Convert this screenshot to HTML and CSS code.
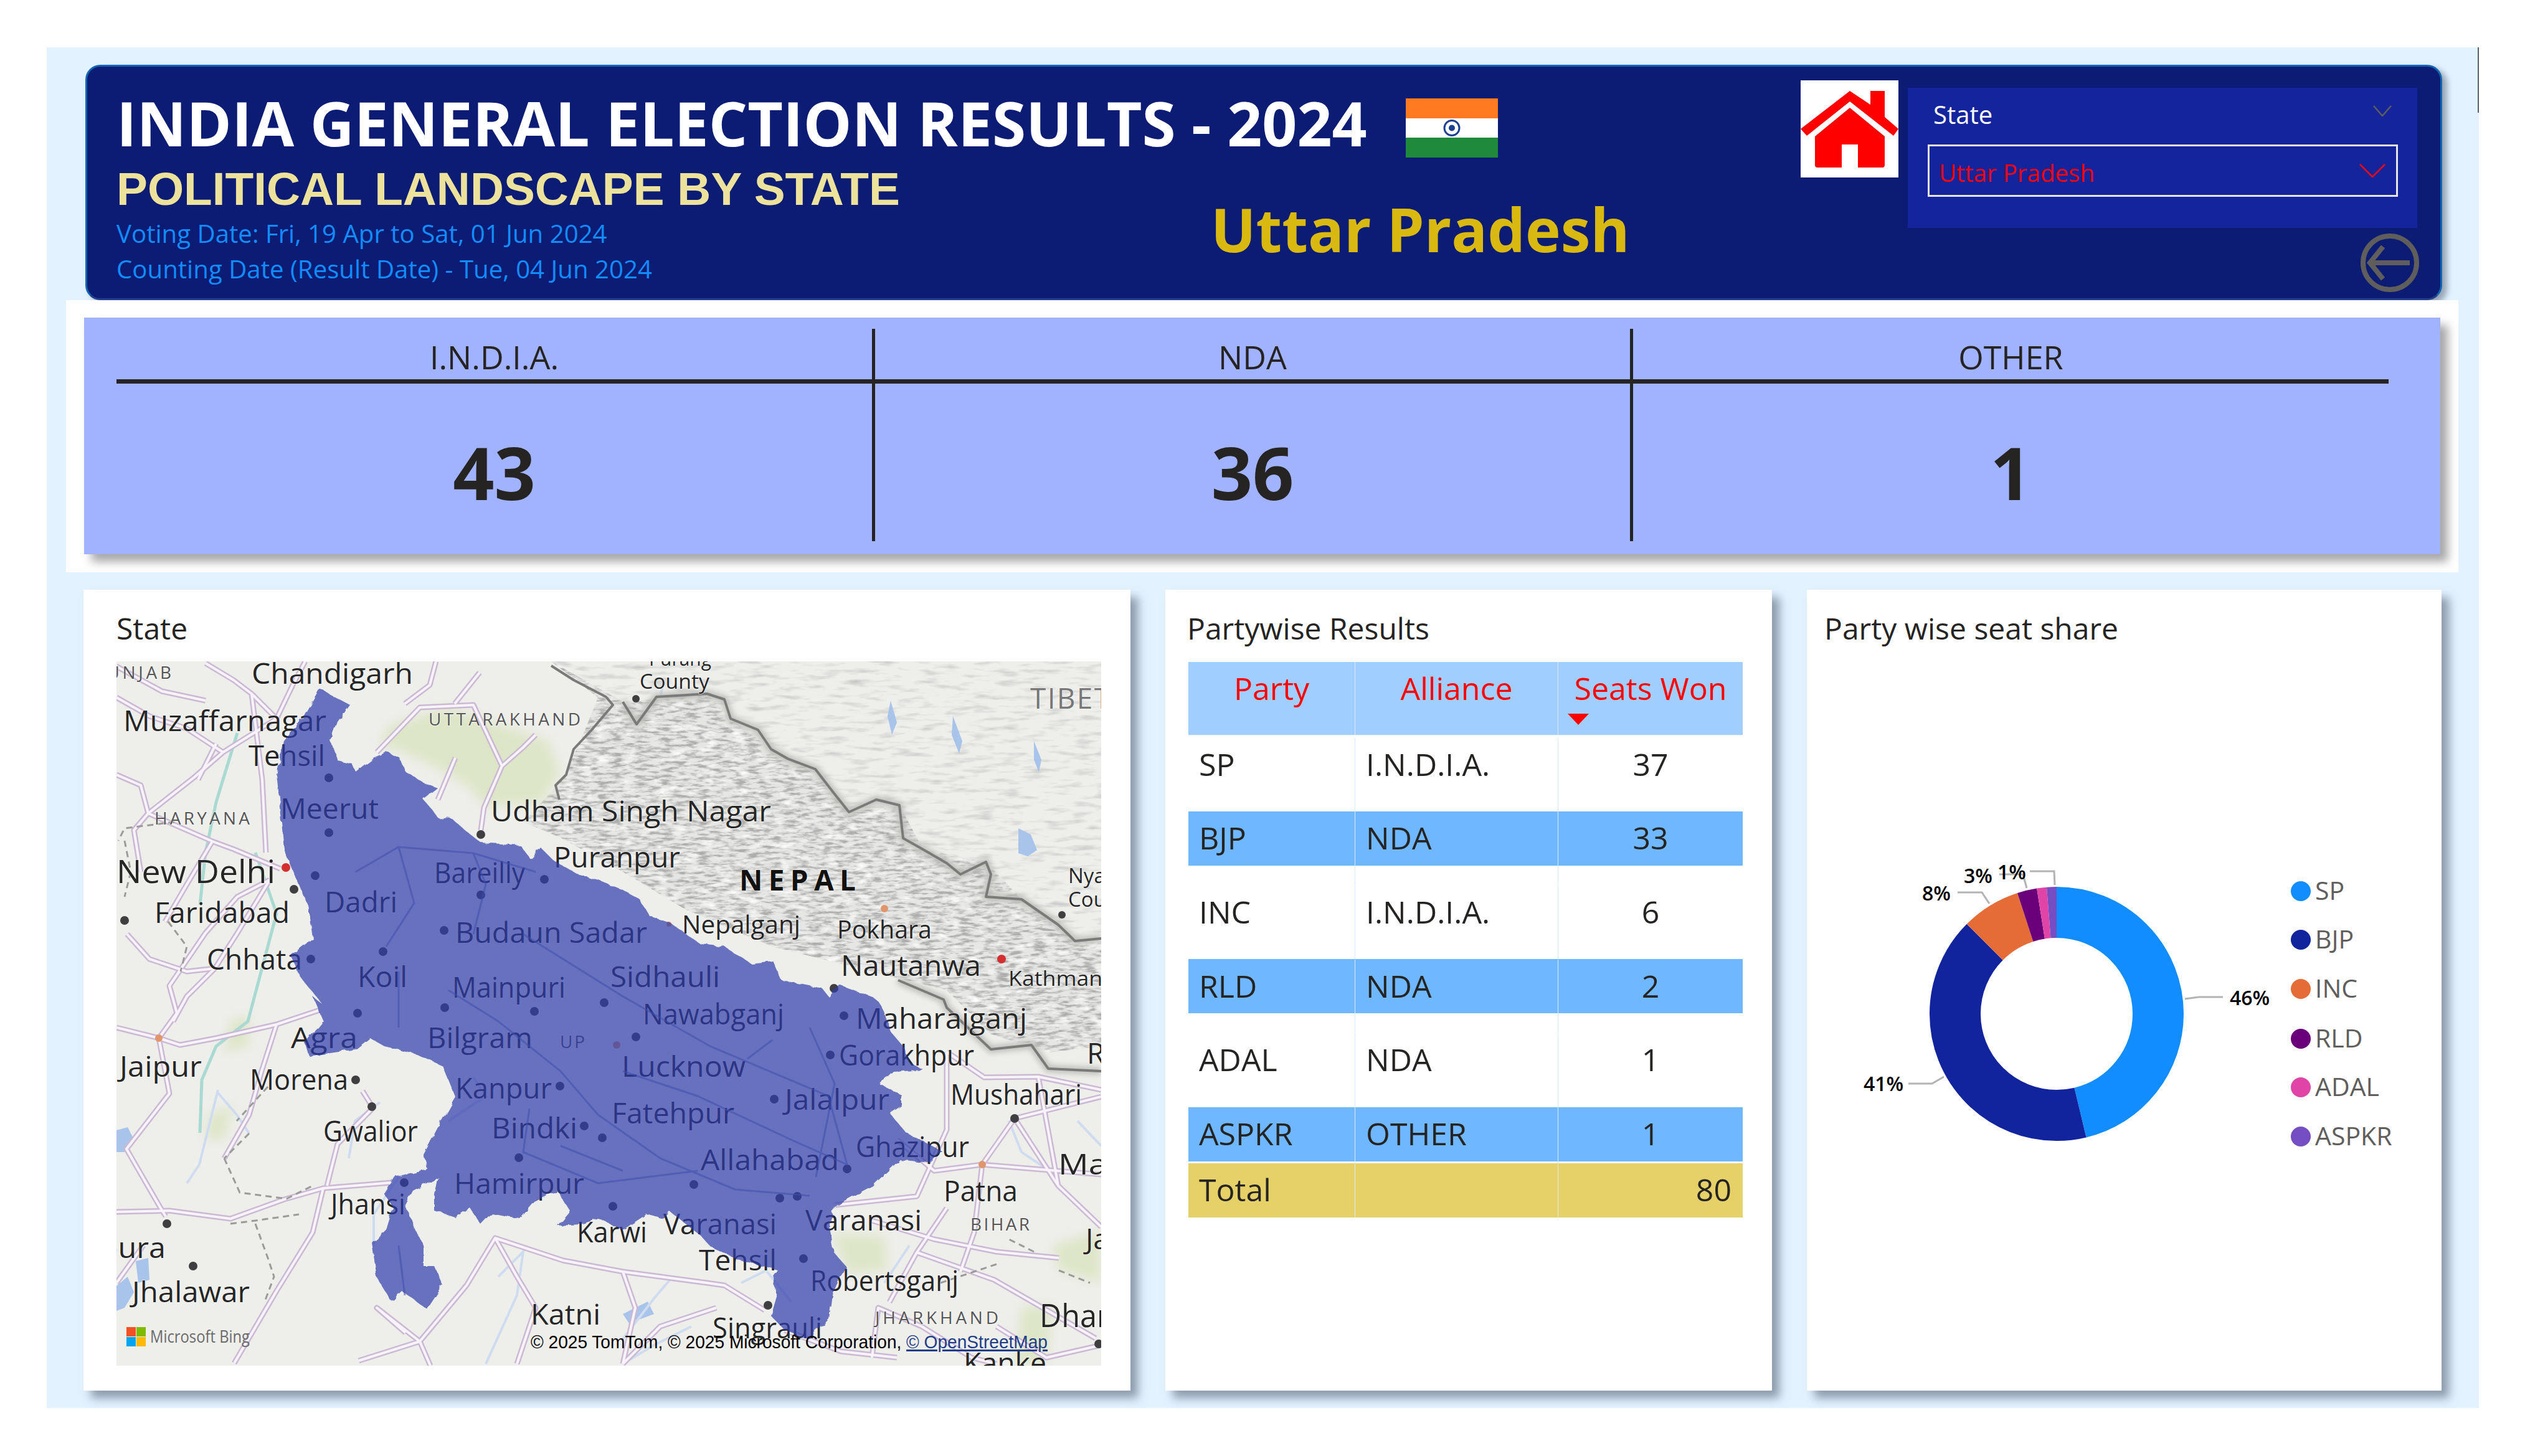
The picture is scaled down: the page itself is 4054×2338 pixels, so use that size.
FILE: index.html
```html
<!DOCTYPE html>
<html lang="en">
<head>
  <meta charset="UTF-8" />
  <title>India General Election Results - 2024</title>
  <link rel="stylesheet" href="styles.css">
</head>
<body>

  <div class="report">

    <!-- Top banner -->
    <header class="banner">
      <div class="banner-left">
        <div class="title-row">
          <h1 class="title">INDIA GENERAL ELECTION RESULTS - 2024</h1>
          <svg class="flag" viewBox="0 0 148 95">
            <rect width="148" height="32" fill="#ff7a21"/>
            <rect y="32" width="148" height="31" fill="#ffffff"/>
            <rect y="63" width="148" height="32" fill="#1f8a3b"/>
            <circle cx="74" cy="47.5" r="12" fill="none" stroke="#1c3f94" stroke-width="3"/>
            <circle cx="74" cy="47.5" r="5" fill="#1c3f94"/>
          </svg>
        </div>
        <div class="sub-row">
          <div class="sub-left">
            <h2 class="subtitle">POLITICAL LANDSCAPE BY STATE</h2>
            <p class="date date-first">Voting Date: Fri, 19 Apr to Sat, 01 Jun 2024</p>
            <p class="date">Counting Date (Result Date) - Tue, 04 Jun 2024</p>
          </div>
          <div class="state-name">Uttar Pradesh</div>
        </div>
      </div>

      <div class="banner-right">
        <div class="home-tile">
          <svg class="home-icon" viewBox="0 0 157 156">
            <path fill="#ff0000" d="M79 17 L112 39 L112 17 L135 17 L135 59 L157 78 L149 89 L79 34 L10 89 L0 78 Z"/>
            <path fill="#ff0000" d="M79 44 L135 90 L135 136 Q135 140 131 140 L92 140 L92 103 L66 103 L66 140 L27 140 Q23 140 23 136 L23 90 Z"/>
          </svg>
        </div>
        <div class="right-col">
          <div class="slicer">
            <div class="slicer-head">
              <span class="slicer-label">State</span>
              <svg class="chev-small" viewBox="0 0 30 18"><path d="M1 1 L15 17 L29 1"/></svg>
            </div>
            <div class="slicer-box">
              <span>Uttar Pradesh</span>
              <svg class="chev-red" viewBox="0 0 42 22"><path d="M1 1 L21 21 L41 1"/></svg>
            </div>
          </div>
          <svg class="back-btn" viewBox="0 0 94 94">
            <circle cx="47" cy="47" r="43" fill="none" stroke="#605e5c" stroke-width="8"/>
            <path d="M36 21 L15 47 L36 73 M15 47 L79 47" fill="none" stroke="#605e5c" stroke-width="8"/>
          </svg>
        </div>
      </div>
    </header>

    <!-- Alliance totals -->
    <section class="kpi-band">
      <div class="kpi-card">
        <div class="kpi">
          <div class="kpi-label">I.N.D.I.A.</div>
          <div class="kpi-value">43</div>
        </div>
        <div class="kpi">
          <div class="kpi-label">NDA</div>
          <div class="kpi-value">36</div>
        </div>
        <div class="kpi kpi-last">
          <div class="kpi-label">OTHER</div>
          <div class="kpi-value">1</div>
        </div>
      </div>
    </section>

    <section class="cards">

      <!-- Map -->
      <div class="card card-map">
        <h3 class="card-title">State</h3>
        <svg class="map" viewBox="187 1062 1581 1131">
          <defs>
            <filter id="rough" x="-5%" y="-5%" width="110%" height="110%">
              <feTurbulence type="fractalNoise" baseFrequency="0.07" numOctaves="2" seed="4"/>
              <feDisplacementMap in="SourceGraphic" scale="9"/>
            </filter>
            <filter id="hillnoise" x="0" y="0" width="100%" height="100%">
              <feTurbulence type="fractalNoise" baseFrequency="0.05 0.22" numOctaves="4" seed="8"/>
              <feColorMatrix values="0 0 0 0 0.42  0 0 0 0 0.42  0 0 0 0 0.42  3.6 0 0 0 -1.55"/>
            </filter>
            <filter id="snownoise" x="0" y="0" width="100%" height="100%">
              <feTurbulence type="fractalNoise" baseFrequency="0.04 0.08" numOctaves="3" seed="5"/>
              <feColorMatrix values="0 0 0 0 1  0 0 0 0 1  0 0 0 0 1  2.6 0 0 0 -1.35"/>
            </filter>
            <filter id="plainnoise" x="0" y="0" width="100%" height="100%">
              <feTurbulence type="fractalNoise" baseFrequency="0.025 0.12" numOctaves="3" seed="2"/>
              <feColorMatrix values="0 0 0 0 0.55  0 0 0 0 0.55  0 0 0 0 0.55  2 0 0 0 -0.98"/>
            </filter>
            <filter id="soft"><feGaussianBlur stdDeviation="9"/></filter>
            <filter id="soft2"><feGaussianBlur stdDeviation="5"/></filter>
            <clipPath id="hillclip">
              <path d="M885 1062 L1000 1127 L1135 1114 L1173 1154 L1238 1203 L1309 1235 L1363 1304 L1444 1293 L1482 1364 L1583 1384 L1640 1444 L1726 1511 L1768 1507 L1768 1680 L1683 1690 L1590 1660 L1520 1590 L1400 1560 L1240 1520 L1100 1460 L1000 1400 L900 1345 L840 1320 L905 1250 L940 1170 L960 1120 Z"/>
            </clipPath>
            <clipPath id="tibetclip">
              <path d="M885 1062 L1768 1062 L1768 1507 L1726 1511 L1640 1444 L1583 1384 L1482 1364 L1444 1293 L1363 1304 L1309 1235 L1238 1203 L1173 1154 L1135 1114 L1000 1127 Z"/>
            </clipPath>
          </defs>

          <rect class="map-land" x="187" y="1062" width="1581" height="1131"/>

          <!-- Terrain -->
          <g clip-path="url(#tibetclip)">
            <rect x="187" y="1062" width="1581" height="1131" filter="url(#plainnoise)"/>
          </g>
          <g clip-path="url(#hillclip)">
            <rect class="map-hill" x="187" y="1062" width="1581" height="1131"/>
            <rect x="187" y="1062" width="1581" height="1131" filter="url(#hillnoise)"/>
            <rect x="187" y="1062" width="1581" height="1131" filter="url(#snownoise)"/>
          </g>
          <g class="map-green" filter="url(#soft)">
            <path d="M610 1195 L625 1165 L720 1135 L880 1190 L900 1240 L870 1290 L780 1295 L750 1262 L700 1232 L640 1205 Z"/>
            <path d="M1336 1980 L1420 1985 L1425 2040 L1360 2045 Z"/>
            <path d="M1640 2100 L1690 2095 L1680 2190 L1630 2190 Z"/>
            <path d="M1690 2000 L1768 1975 L1768 2060 L1700 2040 Z"/>
            <path d="M370 1640 L400 1630 L400 1680 L360 1690 Z"/>
            <path d="M335 1790 L375 1775 L360 1830 L330 1830 Z"/>
          </g>

          <!-- Water -->
          <g class="map-water">
            <path d="M187 1815 L205 1810 L215 1830 L200 1850 L187 1850 Z"/>
            <path d="M218 2025 L238 2020 L240 2055 L222 2060 Z"/>
            <path d="M187 2065 L205 2050 L215 2075 L200 2100 L187 2105 Z"/>
            <path d="M1430 1125 L1440 1160 L1432 1180 L1425 1150 Z"/>
            <path d="M1530 1150 L1545 1190 L1540 1210 L1528 1180 Z"/>
            <path d="M1660 1190 L1672 1220 L1668 1240 L1660 1220 Z"/>
            <path d="M1635 1330 L1655 1340 L1665 1365 L1650 1375 L1635 1370 Z"/>
            <path d="M1000 2110 L1040 2090 L1050 2110 L1010 2125 Z"/>
          </g>
          <g class="map-river">
            <path d="M1065 1095 L1060 1120 M1000 2150 L1050 2085 L1080 2050 M560 1860 L570 1800 L610 1770 M640 1890 L600 1950 L600 2000 M720 1800 L780 1760 L760 1730 M350 1755 L380 1790 L400 1820 M300 1900 L320 1870 L350 1750 M1000 2190 L1050 2160 L1110 2130 M800 2050 L840 2010 L830 2080 L780 2190 M1620 1800 L1640 1850 L1700 1890 M1460 2000 L1420 2060 M1730 1800 L1768 1840 M1190 2060 L1230 2040 L1270 2090"/>
          </g>
          <g class="map-teal">
            <path d="M381 1177 L347 1288 L330 1369 L321 1453"/>
            <path d="M410 1369 L444 1467 L398 1640 L347 1680 L324 1734 L321 1819"/>
          </g>

          <!-- Roads -->
          <g id="roads" class="road-set">
            <path d="M255 1667 L289 1678 L347 1667 L444 1645 L513 1622"/>
            <path d="M255 1667 L284 1627 L272 1583 L330 1498 L381 1440 L433 1413"/>
            <path d="M255 1667 L272 1756 L203 1845 L255 1935 L266 1953"/>
            <path d="M187 1946 L272 1944 L370 1957 L456 1926 L519 1908 L628 1899"/>
            <path d="M519 1908 L502 1979 L444 2073 L376 2189"/>
            <path d="M582 1752 L599 1779 L542 1837 L525 1904"/>
            <path d="M674 2154 L749 2064 L795 1988 L904 2024 L1000 2042 L1135 2060 L1163 2064 L1228 2104"/>
            <path d="M674 2154 L605 2100 L651 2140 M674 2154 L576 2185 M674 2154 L691 2193"/>
            <path d="M1520 1689 L1520 1814 L1472 1921 L1341 1935"/>
            <path d="M1629 1796 L1768 1761 M1629 1796 L1577 1870 L1768 1886 M1577 1870 L1564 1979 L1542 2042"/>
            <path d="M1472 2011 L1596 2055 L1759 2149 M1428 2091 L1472 2011 L1520 1940"/>
            <path d="M1667 1729 L1699 1904 L1768 1970 M1629 1796 L1699 1904"/>
            <path d="M605 1208 L674 1136 L760 1132 L806 1230 L777 1297 L772 1333 M731 1217 L703 1284"/>
            <path d="M330 1065 L375 1092 L404 1114 L444 1154 L358 1208 L312 1248 L238 1306 L215 1333 L226 1400"/>
            <path d="M404 1114 L421 1252 L427 1369 M238 1306 L341 1351 L376 1364 L450 1395"/>
            <path d="M187 1244 L226 1261 L238 1306 M318 1252 L347 1194 M187 1070 L260 1110 L330 1125"/>
            <path d="M433 1413 L380 1500 L345 1555 L300 1600 L278 1640"/>
            <path d="M1000 2190 L1060 2130 L1150 2100 M1260 2136 L1350 2170 L1440 2180"/>
            <path d="M187 2060 L230 2000 M1400 2180 L1410 2100 L1480 2130 L1560 2180 L1600 2190"/>
            <path d="M1600 2130 L1680 2180 L1768 2160"/>
            <path d="M444 1154 L470 1100 L490 1062 M358 1208 L300 1170 L240 1150 L187 1120 M341 1351 L300 1420 L265 1480"/>
            <path d="M700 1062 L690 1100 L650 1130 M806 1230 L840 1200 L860 1180 M730 1130 L770 1080"/>
            <path d="M204 1500 L240 1540 L300 1560 L345 1555 M187 1650 L255 1667"/>
            <path d="M444 1645 L420 1720 L400 1790 L360 1860"/>
            <path d="M795 1988 L830 2050 L860 2100 L830 2190 M1000 2042 L1020 2100 L1000 2190"/>
            <path d="M1440 1830 L1500 1880 L1577 1870 M1400 1960 L1500 1990 L1600 2010 L1700 2020"/>
            <path d="M1520 1689 L1580 1730 L1667 1729 L1768 1750"/>
          </g>
          <use href="#roads" class="road-out"/>
          <use href="#roads" class="road-in"/>

          <!-- Dashed state and district lines -->
          <g class="map-dash">
            <path d="M360 1860 L385 1915 L460 1925 L500 1905 M370 1965 L410 1960 L480 1950 M410 1965 L430 2020 L440 2050 L425 2090"/>
            <path d="M200 1350 L210 1400 L200 1440 M270 1480 L300 1520 L290 1560 M280 1320 L200 1330 L190 1350"/>
            <path d="M1510 2060 L1600 2030 M1660 2010 L1620 1990 M1700 2040 L1750 2060 M400 1820 L360 1860 M430 1745 L380 1800"/>
          </g>
          <g class="border-shade" filter="url(#soft2)">
            <path d="M1000 1127 L1022 1163 L1054 1119 L1135 1114 L1163 1123 L1173 1154 L1217 1172 L1238 1203 L1266 1219 L1309 1235 L1336 1270 L1363 1304 L1407 1284 L1444 1293 L1450 1346 L1482 1364 L1520 1386 L1542 1404 L1583 1384 L1591 1404 L1583 1440 L1640 1444 L1699 1485 L1726 1511 L1768 1507"/>
            <path d="M1442 1574 L1515 1605 L1520 1618 L1591 1685 L1656 1678 L1683 1716 L1768 1720"/>
          </g>
          <path class="map-border" d="M1000 1127 L1022 1163 L1054 1119 L1135 1114 L1163 1123 L1173 1154 L1217 1172 L1238 1203 L1266 1219 L1309 1235 L1336 1270 L1363 1304 L1407 1284 L1444 1293 L1450 1346 L1482 1364 L1520 1386 L1542 1404 L1583 1384 L1591 1404 L1583 1440 L1640 1444 L1699 1485 L1726 1511 L1768 1507"/>
          <path class="map-border" d="M885 1069 L921 1092 L973 1119 L984 1132 L950 1172 L921 1203 L909 1244 L892 1261 L898 1284"/>
          <path class="map-border" d="M1442 1574 L1515 1605 L1520 1618 L1591 1685 L1656 1678 L1683 1716 L1768 1720"/>

          <!-- Place dots -->
          <g class="dots">
            <circle cx="528" cy="1249" r="7"/><circle cx="528" cy="1337" r="7"/><circle cx="506" cy="1406" r="7"/><circle cx="472" cy="1428" r="7"/><circle cx="200" cy="1478" r="7"/><circle cx="772" cy="1340" r="7"/><circle cx="874" cy="1412" r="7"/><circle cx="772" cy="1437" r="7"/><circle cx="713" cy="1494" r="7"/><circle cx="615" cy="1528" r="7"/><circle cx="499" cy="1540" r="7"/><circle cx="714" cy="1618" r="7"/><circle cx="858" cy="1624" r="7"/><circle cx="970" cy="1610" r="7"/><circle cx="574" cy="1627" r="7"/>
            <circle cx="571" cy="1734" r="7"/><circle cx="597" cy="1777" r="7"/><circle cx="899" cy="1744" r="7"/><circle cx="938" cy="1808" r="7"/><circle cx="967" cy="1827" r="7"/><circle cx="833" cy="1859" r="7"/><circle cx="649" cy="1899" r="7"/><circle cx="984" cy="1937" r="7"/><circle cx="268" cy="1965" r="7"/><circle cx="310" cy="2033" r="7"/>
            <circle cx="1021" cy="1665" r="7"/><circle cx="1355" cy="1631" r="7"/><circle cx="1333" cy="1694" r="7"/><circle cx="1243" cy="1765" r="7"/><circle cx="1360" cy="1877" r="7"/><circle cx="1114" cy="1902" r="7"/><circle cx="1252" cy="1924" r="7"/><circle cx="1280" cy="1921" r="7"/><circle cx="1290" cy="2021" r="7"/><circle cx="1233" cy="2096" r="7"/><circle cx="1629" cy="1796" r="7"/><circle cx="1764" cy="2158" r="7"/><circle cx="1339" cy="1587" r="7"/><circle cx="1021" cy="1122" r="6"/><circle cx="1705" cy="1469" r="6"/>
          </g>
          <g class="dots-red">
            <circle cx="459" cy="1393" r="7"/><circle cx="1608" cy="1540" r="7"/>
          </g>
          <g class="dots-orange">
            <circle cx="1420" cy="1459" r="6"/><circle cx="1577" cy="1870" r="6"/><circle cx="255" cy="1667" r="6"/><circle cx="990" cy="1678" r="6"/><circle cx="1074" cy="1484" r="4"/>
          </g>

          <!-- Labels sit under the state shade so they tint the same way -->
          <g class="labels">
            <text x="404" y="1098" textLength="259" lengthAdjust="spacingAndGlyphs">Chandigarh</text>
            <text x="198" y="1174" textLength="326" lengthAdjust="spacingAndGlyphs">Muzaffarnagar</text>
            <text x="399" y="1230" textLength="123" lengthAdjust="spacingAndGlyphs">Tehsil</text>
            <text x="450" y="1315" textLength="158" lengthAdjust="spacingAndGlyphs">Meerut</text>
            <text x="788" y="1319" textLength="450" lengthAdjust="spacingAndGlyphs">Udham Singh Nagar</text>
            <text x="187" y="1418" textLength="255" lengthAdjust="spacingAndGlyphs" class="lb-l">New Delhi</text>
            <text x="697" y="1418" textLength="146" lengthAdjust="spacingAndGlyphs">Bareilly</text>
            <text x="889" y="1393" textLength="203" lengthAdjust="spacingAndGlyphs">Puranpur</text>
            <text x="521" y="1465" textLength="117" lengthAdjust="spacingAndGlyphs">Dadri</text>
            <text x="248" y="1482" textLength="217" lengthAdjust="spacingAndGlyphs">Faridabad</text>
            <text x="731" y="1514" textLength="308" lengthAdjust="spacingAndGlyphs">Budaun Sadar</text>
            <text x="332" y="1557" textLength="153" lengthAdjust="spacingAndGlyphs">Chhata</text>
            <text x="574" y="1585" textLength="80" lengthAdjust="spacingAndGlyphs">Koil</text>
            <text x="726" y="1602" textLength="182" lengthAdjust="spacingAndGlyphs">Mainpuri</text>
            <text x="980" y="1585" textLength="176" lengthAdjust="spacingAndGlyphs">Sidhauli</text>
            <text x="1095" y="1499" textLength="190" lengthAdjust="spacingAndGlyphs" class="lb-m">Nepalganj</text>
            <text x="1344" y="1507" textLength="152" lengthAdjust="spacingAndGlyphs" class="lb-m">Pokhara</text>
            <text x="1350" y="1567" textLength="225" lengthAdjust="spacingAndGlyphs">Nautanwa</text>
            <text x="1619" y="1583" textLength="195" lengthAdjust="spacingAndGlyphs" class="lb-s">Kathmandu</text>
            <text x="1715" y="1418" class="lb-s">Nya</text>
            <text x="1715" y="1456" class="lb-s">Cou</text>
            <text x="1027" y="1106" textLength="112" lengthAdjust="spacingAndGlyphs" class="lb-s">County</text>
            <text x="1042" y="1069" textLength="100" lengthAdjust="spacingAndGlyphs" class="lb-s">Purang</text>
            <text x="1032" y="1645" textLength="227" lengthAdjust="spacingAndGlyphs">Nawabganj</text>
            <text x="1374" y="1652" textLength="275" lengthAdjust="spacingAndGlyphs">Maharajganj</text>
            <text x="1347" y="1711" textLength="217" lengthAdjust="spacingAndGlyphs">Gorakhpur</text>
            <text x="998" y="1729" textLength="199" lengthAdjust="spacingAndGlyphs">Lucknow</text>
            <text x="1526" y="1774" textLength="211" lengthAdjust="spacingAndGlyphs">Mushahari</text>
            <text x="1260" y="1782" textLength="168" lengthAdjust="spacingAndGlyphs">Jalalpur</text>
            <text x="982" y="1804" textLength="197" lengthAdjust="spacingAndGlyphs">Fatehpur</text>
            <text x="1125" y="1879" textLength="222" lengthAdjust="spacingAndGlyphs">Allahabad</text>
            <text x="1374" y="1858" textLength="182" lengthAdjust="spacingAndGlyphs">Ghazipur</text>
            <text x="1699" y="1886" textLength="112" lengthAdjust="spacingAndGlyphs">Mau</text>
            <text x="1515" y="1929" textLength="119" lengthAdjust="spacingAndGlyphs">Patna</text>
            <text x="1065" y="1982" textLength="182" lengthAdjust="spacingAndGlyphs">Varanasi</text>
            <text x="1293" y="1976" textLength="187" lengthAdjust="spacingAndGlyphs">Varanasi</text>
            <text x="1743" y="2006">Ja</text>
            <text x="1122" y="2040" textLength="125" lengthAdjust="spacingAndGlyphs">Tehsil</text>
            <text x="1301" y="2073" textLength="238" lengthAdjust="spacingAndGlyphs">Robertsganj</text>
            <text x="1669" y="2131" textLength="112" lengthAdjust="spacingAndGlyphs" class="lb-l">Dhar</text>
            <text x="1144" y="2149" textLength="176" lengthAdjust="spacingAndGlyphs">Singrauli</text>
            <text x="1547" y="2205" textLength="133" lengthAdjust="spacingAndGlyphs">Kanke</text>
            <text x="1745" y="1708">R</text>
            <text x="467" y="1683" textLength="107" lengthAdjust="spacingAndGlyphs">Agra</text>
            <text x="686" y="1683" textLength="169" lengthAdjust="spacingAndGlyphs">Bilgram</text>
            <text x="192" y="1729" textLength="132" lengthAdjust="spacingAndGlyphs">Jaipur</text>
            <text x="401" y="1750" textLength="158" lengthAdjust="spacingAndGlyphs">Morena</text>
            <text x="731" y="1764" textLength="155" lengthAdjust="spacingAndGlyphs">Kanpur</text>
            <text x="519" y="1833" textLength="152" lengthAdjust="spacingAndGlyphs">Gwalior</text>
            <text x="789" y="1828" textLength="138" lengthAdjust="spacingAndGlyphs">Bindki</text>
            <text x="729" y="1917" textLength="209" lengthAdjust="spacingAndGlyphs">Hamirpur</text>
            <text x="531" y="1950" textLength="120" lengthAdjust="spacingAndGlyphs">Jhansi</text>
            <text x="926" y="1995" textLength="113" lengthAdjust="spacingAndGlyphs">Karwi</text>
            <text x="212" y="2091" textLength="189" lengthAdjust="spacingAndGlyphs">Jhalawar</text>
            <text x="852" y="2127" textLength="112" lengthAdjust="spacingAndGlyphs">Katni</text>
            <text x="160" y="2020" textLength="106" lengthAdjust="spacingAndGlyphs">pura</text>
            <text x="1187" y="1430" textLength="187" lengthAdjust="spacing" class="lb-country">NEPAL</text>
            <text x="1654" y="1138" textLength="128" lengthAdjust="spacing" class="lb-region">TIBET</text>
            <text x="150" y="1090" textLength="125" lengthAdjust="spacing" class="lb-state">PUNJAB</text>
            <text x="688" y="1165" textLength="244" lengthAdjust="spacing" class="lb-state">UTTARAKHAND</text>
            <text x="248" y="1324" textLength="153" lengthAdjust="spacing" class="lb-state">HARYANA</text>
            <text x="899" y="1683" textLength="40" lengthAdjust="spacing" class="lb-state">UP</text>
            <text x="1558" y="1976" textLength="95" lengthAdjust="spacing" class="lb-state">BIHAR</text>
            <text x="1405" y="2126" textLength="198" lengthAdjust="spacing" class="lb-state">JHARKHAND</text>
          </g>

          <!-- Shaded state -->
          <path class="up-shape" filter="url(#rough)" d="M513 1106 L562 1132 L542 1159 L531 1190 L542 1221 L565 1226 L571 1239 L599 1217 L620 1208 L642 1217 L651 1239 L680 1257 L703 1266 L680 1284 L691 1297 L703 1313 L726 1315 L749 1335 L772 1353 L835 1357 L852 1380 L869 1362 L889 1382 L927 1404 L961 1413 L1000 1429 L1027 1444 L1043 1471 L1076 1482 L1125 1516 L1163 1520 L1206 1547 L1241 1543 L1255 1574 L1320 1587 L1331 1601 L1347 1581 L1401 1601 L1412 1610 L1420 1625 L1431 1658 L1450 1680 L1461 1707 L1482 1717 L1434 1720 L1412 1741 L1447 1758 L1447 1774 L1428 1787 L1455 1819 L1512 1848 L1493 1868 L1444 1863 L1401 1904 L1339 1937 L1331 1971 L1339 2011 L1358 2033 L1336 2078 L1331 2118 L1298 2151 L1260 2136 L1238 2113 L1247 2082 L1241 2051 L1249 2040 L1184 2022 L1141 2002 L1125 1984 L1076 1946 L1065 1957 L1038 1950 L1000 1975 L961 1957 L932 1966 L895 1968 L915 1944 L895 1912 L858 1930 L835 1957 L789 1948 L772 1966 L754 1939 L731 1955 L697 1944 L697 1917 L703 1890 L663 1912 L651 1935 L663 1966 L680 2002 L680 2033 L697 2033 L711 2064 L686 2102 L645 2073 L628 2089 L605 2051 L597 1995 L620 1975 L631 1939 L617 1917 L634 1890 L686 1877 L680 1854 L708 1801 L731 1761 L711 1712 L668 1692 L617 1680 L594 1667 L571 1685 L496 1696 L490 1676 L519 1640 L502 1600 L519 1614 L479 1565 L467 1534 L502 1507 L496 1458 L473 1404 L456 1364 L450 1297 L444 1244 L456 1190 L485 1154 Z"/>
          <g class="up-lines">
            <path d="M571 1400 L640 1360 L760 1370 L860 1400 M640 1360 L665 1450 L620 1520 M760 1370 L780 1420 L760 1500"/>
            <path d="M840 1500 L1000 1600 L1140 1680 L1330 1760 L1360 1870 M1000 1720 L1120 1760 L1270 1830 L1360 1870"/>
            <path d="M720 1590 L800 1640 L900 1720 L960 1790 L1060 1860 L1180 1910 L1300 1920 M640 1560 L640 1650 M850 1780 L840 1850 L960 1900 L1120 1880"/>
            <path d="M1300 1650 L1340 1740 L1310 1890 M640 2000 L650 2080 M1240 1670 L1200 1700 M900 1840 L1000 1880"/>
          </g>

          <!-- Attribution -->
          <g class="bing-logo">
            <rect x="203" y="2131" width="15" height="15" fill="#f25022"/>
            <rect x="219" y="2131" width="15" height="15" fill="#7fba00"/>
            <rect x="203" y="2147" width="15" height="15" fill="#00a4ef"/>
            <rect x="219" y="2147" width="15" height="15" fill="#ffb900"/>
          </g>
          <text class="bing-text" x="241" y="2156" textLength="160" lengthAdjust="spacingAndGlyphs">Microsoft Bing</text>
          <text class="map-credit" x="852" y="2165" textLength="830" lengthAdjust="spacingAndGlyphs">© 2025 TomTom, © 2025 Microsoft Corporation, <tspan class="map-credit-link">© OpenStreetMap</tspan></text>
        </svg>
      </div>

      <!-- Results table -->
      <div class="card card-table">
        <h3 class="card-title">Partywise Results</h3>
        <div class="table">
          <div class="row row-head">
            <div class="cell">Party</div>
            <div class="cell">Alliance</div>
            <div class="cell cell-sort">Seats Won</div>
          </div>
          <div class="row row-1">
            <div class="cell">SP</div>
            <div class="cell">I.N.D.I.A.</div>
            <div class="cell cell-num">37</div>
          </div>
          <div class="row row-2 row-alt">
            <div class="cell">BJP</div>
            <div class="cell">NDA</div>
            <div class="cell cell-num">33</div>
          </div>
          <div class="row row-3">
            <div class="cell">INC</div>
            <div class="cell">I.N.D.I.A.</div>
            <div class="cell cell-num">6</div>
          </div>
          <div class="row row-4 row-alt">
            <div class="cell">RLD</div>
            <div class="cell">NDA</div>
            <div class="cell cell-num">2</div>
          </div>
          <div class="row row-5">
            <div class="cell">ADAL</div>
            <div class="cell">NDA</div>
            <div class="cell cell-num">1</div>
          </div>
          <div class="row row-6 row-alt">
            <div class="cell">ASPKR</div>
            <div class="cell">OTHER</div>
            <div class="cell cell-num">1</div>
          </div>
          <div class="row row-total">
            <div class="cell">Total</div>
            <div class="cell"></div>
            <div class="cell cell-total">80</div>
          </div>
        </div>
      </div>

      <!-- Donut chart -->
      <div class="card card-donut">
        <h3 class="card-title">Party wise seat share</h3>
        <svg class="donut" viewBox="2901 1062 1019 1171">
          <g class="slices" transform="rotate(-90 3302 1628)">
            <circle cx="3302" cy="1628" r="163" pathLength="80" stroke="#118dff" stroke-dasharray="37 43"/>
            <circle cx="3302" cy="1628" r="163" pathLength="80" stroke="#12239e" stroke-dasharray="33 47" stroke-dashoffset="-37"/>
            <circle cx="3302" cy="1628" r="163" pathLength="80" stroke="#e66c37" stroke-dasharray="6 74" stroke-dashoffset="-70"/>
            <circle cx="3302" cy="1628" r="163" pathLength="80" stroke="#6b007b" stroke-dasharray="2 78" stroke-dashoffset="-76"/>
            <circle cx="3302" cy="1628" r="163" pathLength="80" stroke="#e044a7" stroke-dasharray="1 79" stroke-dashoffset="-78"/>
            <circle cx="3302" cy="1628" r="163" pathLength="80" stroke="#744ec2" stroke-dasharray="1 79" stroke-dashoffset="-79"/>
          </g>
          <g class="leaders">
            <path d="M3508 1604 L3530 1601 L3569 1601"/>
            <path d="M3064 1740 L3102 1740 L3121 1729"/>
            <path d="M3143 1433 L3182 1433 L3194 1451"/>
            <path d="M3210 1404 L3248 1404 L3254 1426"/>
            <path d="M3259 1399 L3298 1399 L3299 1421"/>
          </g>
          <g class="pct">
            <text x="3580" y="1614">46%</text>
            <text x="2992" y="1752">41%</text>
            <text x="3086" y="1446">8%</text>
            <text x="3153" y="1418">3%</text>
            <text x="3207" y="1412">1%</text>
          </g>
          <g class="legend">
            <circle cx="3694" cy="1431" r="16" fill="#118dff"/><text x="3717" y="1445">SP</text>
            <circle cx="3694" cy="1509" r="16" fill="#12239e"/><text x="3717" y="1523">BJP</text>
            <circle cx="3694" cy="1588" r="16" fill="#e66c37"/><text x="3717" y="1602">INC</text>
            <circle cx="3694" cy="1668" r="16" fill="#6b007b"/><text x="3717" y="1682">RLD</text>
            <circle cx="3694" cy="1746" r="16" fill="#e044a7"/><text x="3717" y="1760">ADAL</text>
            <circle cx="3694" cy="1825" r="16" fill="#744ec2"/><text x="3717" y="1839">ASPKR</text>
          </g>
        </svg>
      </div>

    </section>
  </div>

</body>
</html>
```
FILE: styles.css
```css
* {
  box-sizing: border-box;
}
html, body {
  margin: 0;
  padding: 0;
  background: #fff;
}
body {
  width: 4054px;
  height: 2338px;
  overflow: hidden;
  font-family: "Open Sans", "Noto Sans", sans-serif;
  color: #252423;
}
h1, h2, h3, p {
  margin: 0;
}

/* page panel */
.report {
  position: relative;
  width: 3905px;
  height: 2185px;
  margin: 76px 0 0 75px;
  padding-top: 28px;
  background: #e3f2ff;
}
.report::after {
  content: "";
  position: absolute;
  top: 0;
  right: 0;
  width: 2px;
  height: 105px;
  background: #55606a;
}

/* banner */
.banner {
  display: flex;
  width: 3784px;
  height: 378px;
  margin-left: 62px;
  padding-left: 47px;
  background: #0c1c75;
  border: 3px solid #1265b0;
  border-bottom-color: #24408f;
  border-radius: 24px;
  box-shadow: 8px 6px 10px rgba(60, 70, 90, 0.45);
}
.banner-left {
  width: 2702px;
}
.title-row {
  display: flex;
  align-items: flex-start;
  margin-top: 34px;
}
.title {
  width: 2070px;
  font-size: 98.2px;
  font-weight: 700;
  line-height: 112px;
  color: #fff;
  white-space: nowrap;
}
.flag {
  width: 148px;
  height: 95px;
  margin-top: 17px;
}
.sub-row {
  display: flex;
}
.sub-left {
  width: 1757px;
}
.subtitle {
  margin-top: 8px;
  font-family: "Liberation Sans", Arial, sans-serif;
  font-size: 74.8px;
  font-weight: 700;
  line-height: 84px;
  color: #ede29b;
  white-space: nowrap;
}
.date {
  font-size: 40.2px;
  line-height: 57px;
  color: #118dff;
  white-space: nowrap;
}
.date-first {
  margin-top: 1px;
}
.state-name {
  margin-top: 60px;
  font-size: 96px;
  font-weight: 700;
  line-height: 110px;
  color: #d9b80f;
  white-space: nowrap;
}

.banner-right {
  display: flex;
  margin-left: 2px;
  padding-top: 22px;
}
.home-tile {
  width: 157px;
  height: 156px;
  background: #fff;
}
.home-icon {
  display: block;
  width: 157px;
  height: 156px;
}
.right-col {
  display: flex;
  flex-direction: column;
  width: 818px;
  margin-left: 15px;
  padding-top: 12px;
}
.slicer {
  height: 225px;
  padding: 0 31px 0 32px;
  background: #14249c;
}
.slicer-head {
  display: flex;
  justify-content: space-between;
  align-items: center;
  height: 91px;
  padding: 0 10px 6px 9px;
  font-size: 40px;
  color: #fff;
}
.chev-small {
  width: 30px;
  height: 18px;
  margin-top: -12px;
  fill: none;
  stroke: #605e5c;
  stroke-width: 2.5;
}
.slicer-box {
  display: flex;
  justify-content: space-between;
  align-items: center;
  height: 84px;
  padding: 5px 17px 0 15px;
  border: 3px solid #e6e6e6;
  font-size: 38.5px;
  color: #ff0000;
}
.chev-red {
  width: 42px;
  height: 22px;
  margin-top: -6px;
  fill: none;
  stroke: #ff0000;
  stroke-width: 2.5;
}
.back-btn {
  align-self: flex-end;
  width: 94px;
  height: 94px;
  margin: 9px -3px 0 0;
}

/* alliance totals */
.kpi-band {
  width: 3841px;
  height: 437px;
  margin-left: 31px;
  padding: 28px 29px 29px;
  background: #fff;
}
.kpi-card {
  display: grid;
  grid-template-columns: 1218px 1217px 1213px;
  height: 380px;
  padding: 18px 0 21px 52px;
  background: #a1b2ff;
  box-shadow: 12px 12px 14px rgba(0, 0, 0, 0.35);
}
.kpi {
  border-right: 5px solid #252423;
  text-align: center;
}
.kpi-last {
  border-right: 0;
}
.kpi-label {
  height: 88px;
  padding-top: 8px;
  border-bottom: 7px solid #252423;
  font-size: 52px;
  line-height: 73px;
}
.kpi-value {
  padding-top: 67px;
  font-size: 116px;
  font-weight: 700;
  line-height: 150px;
}

/* bottom row of cards */
.cards {
  display: flex;
  gap: 56px;
  width: 3786px;
  height: 1286px;
  margin: 28px 0 0 59px;
}
.card {
  height: 1286px;
  background: #fff;
  box-shadow: 12px 12px 14px rgba(70, 85, 105, 0.55);
}
.card-title {
  height: 115px;
  padding-top: 8px;
  font-size: 48px;
  font-weight: 400;
  line-height: 107px;
  color: #252423;
}
.card-map {
  width: 1681px;
  padding-left: 53px;
}
.card-table {
  width: 974px;
  padding-left: 37px;
}
.card-table .card-title {
  margin-left: -2px;
}
.card-donut {
  width: 1019px;
}
.card-donut .card-title {
  padding-left: 28px;
}

/* map */
.map {
  display: block;
  width: 1581px;
  height: 1131px;
}
.map-land {
  fill: #eeeeeb;
}
.map-hill {
  fill: #e6e6e4;
}
.map-green {
  fill: #dee6c8;
}
.map-water {
  fill: #a9c4ea;
}
.map-river {
  fill: none;
  stroke: #cfdcf0;
  stroke-width: 4;
}
.map-teal {
  fill: none;
  stroke: #a9dad2;
  stroke-width: 5;
}
.road-set {
  fill: none;
  stroke-linejoin: round;
}
.road-out {
  stroke: #cbb9d4;
  stroke-width: 9;
}
.road-in {
  stroke: #f7f3f8;
  stroke-width: 4;
}
.map-dash {
  fill: none;
  stroke: #9b9b9b;
  stroke-width: 3;
  stroke-dasharray: 10 7;
}
.border-shade {
  fill: none;
  stroke: #bdbdb9;
  stroke-width: 12;
}
.map-border {
  fill: none;
  stroke: #7a7a7a;
  stroke-width: 4;
  stroke-linejoin: round;
}
.dots {
  fill: #3f3f42;
}
.dots-red {
  fill: #d32f2f;
}
.dots-orange {
  fill: #e0956b;
}
.labels text {
  font-family: "Open Sans", sans-serif;
  font-size: 46px;
  fill: #262626;
  paint-order: stroke;
  stroke: rgba(255, 255, 255, 0.5);
  stroke-width: 2px;
}
.labels .lb-m {
  font-size: 40px;
}
.labels .lb-s {
  font-size: 33px;
}
.labels .lb-l {
  font-size: 52px;
}
.labels .lb-country {
  font-size: 46px;
  font-weight: 700;
  fill: #111;
}
.labels .lb-region {
  font-size: 46px;
  fill: #777;
}
.labels .lb-state {
  font-size: 28px;
  fill: #555;
}
.up-shape {
  fill: #2c3dab;
  fill-opacity: 0.7;
}
.up-lines {
  fill: none;
  stroke: #3f4fae;
  stroke-width: 3;
  opacity: 0.55;
}
.bing-text {
  font-family: "Open Sans", sans-serif;
  font-size: 28px;
  fill: #6b6b6b;
}
.map-credit {
  font-family: "Liberation Sans", Arial, sans-serif;
  font-size: 30px;
  fill: #000;
}
.map-credit-link {
  fill: #1f3c88;
  text-decoration: underline;
}

/* results table */
.table {
  width: 890px;
  margin-top: 1px;
}
.row {
  display: grid;
  grid-template-columns: 268px 326px 296px;
  font-size: 50px;
  line-height: 84px;
  color: #252423;
}
.cell {
  padding-left: 17px;
  border-right: 1px solid #d9ebfc;
}
.cell:last-child {
  border-right: 0;
}
.cell-num {
  padding-left: 0;
  text-align: center;
}
.row-head {
  height: 118px;
  background: #a0cfff;
  color: #ff0000;
  border-bottom: 1px solid #eaf3fc;
}
.row-head .cell {
  padding-left: 0;
  text-align: center;
}
.cell-sort {
  position: relative;
}
.cell-sort::after {
  content: "";
  position: absolute;
  left: 15px;
  top: 83px;
  border-left: 17px solid transparent;
  border-right: 17px solid transparent;
  border-top: 18px solid #ff0000;
}
.row-alt {
  background: linear-gradient(#6fb7ff 87px, #fff 87px);
}
.row-1 {
  height: 122px;
  padding-top: 4px;
}
.row-2 {
  height: 118px;
}
.row-3 {
  height: 119px;
  padding-top: 1px;
}
.row-4 {
  height: 118px;
  padding-top: 1px;
}
.row-5 {
  height: 120px;
  padding-top: 1px;
}
.row-6 {
  height: 90px;
}
.row-total {
  height: 87px;
  background: #e6d068;
}
.cell-total {
  padding-right: 18px;
  text-align: right;
}

/* donut */
.donut {
  display: block;
  width: 1019px;
  height: 1171px;
}
.slices circle {
  fill: none;
  stroke-width: 82;
}
.leaders path {
  fill: none;
  stroke: #b3b3b3;
  stroke-width: 3;
}
.pct text {
  font-family: "Open Sans", sans-serif;
  font-size: 32px;
  font-weight: 600;
  fill: #000;
}
.legend text {
  font-family: "Open Sans", sans-serif;
  font-size: 41px;
  fill: #605e5c;
}
```
